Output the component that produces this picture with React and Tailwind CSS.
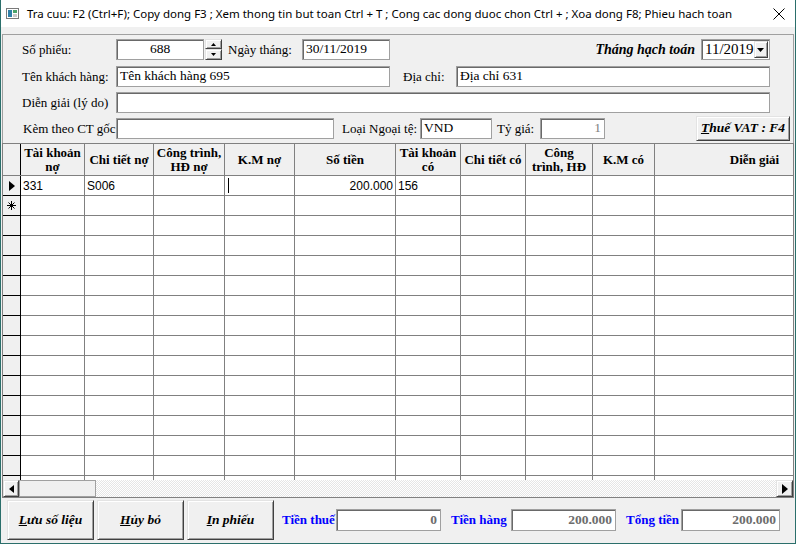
import React from 'react'

const SERIF = "[font-family:'Liberation_Serif','Times_New_Roman',serif]"
const SANS = "[font-family:'Liberation_Sans',Arial,sans-serif]"
const BOX = 'bg-white border border-[#a0a0a0] shadow-[inset_1px_1px_0_#696969]'
const RAISED = 'bg-[#f0f0f0] border border-t-[#e3e3e3] border-l-[#e3e3e3] border-r-[#404040] border-b-[#404040] shadow-[inset_1px_1px_0_#ffffff,inset_-1px_-1px_0_#a0a0a0]'

const COLS = [
  { w: 'w-[64px]', label: ['Tài khoản', 'nợ'] },
  { w: 'w-[69px]', label: ['Chi tiết nợ'] },
  { w: 'w-[71px]', label: ['Công trình,', 'HĐ nợ'] },
  { w: 'w-[70px]', label: ['K.M nợ'] },
  { w: 'w-[101px]', label: ['Số tiền'] },
  { w: 'w-[65px]', label: ['Tài khoản', 'có'] },
  { w: 'w-[65px]', label: ['Chi tiết có'] },
  { w: 'w-[67px]', label: ['Công', 'trình, HĐ'] },
  { w: 'w-[62px]', label: ['K.M có'] },
  { w: 'w-[200px]', label: ['Diễn giải'] },
]

const ROW1 = ['331', 'S006', '', 'caret', '200.000', '156', '', '', '', '']

function Arrow({ dir }) {
  const pts = { right: '0,0 6,5 0,10', left: '5,0 0,4 5,8', down: '0,0 7,0 3.5,4', up: '0,3 5,3 2.5,0', dn: '0,0 5,0 2.5,3' }[dir]
  const size = { right: [6, 10], left: [5, 8], down: [7, 4], up: [5, 3], dn: [5, 3] }[dir]
  return (
    <svg width={size[0]} height={size[1]} viewBox={`0 0 ${size[0]} ${size[1]}`}>
      <polygon points={pts} fill="#000" />
    </svg>
  )
}

function Star() {
  return (
    <svg width="9" height="9" viewBox="0 0 9 9" stroke="#000" strokeWidth="1">
      <line x1="4.5" y1="0" x2="4.5" y2="9" />
      <line x1="0" y1="4.5" x2="9" y2="4.5" />
      <line x1="1.5" y1="1.5" x2="7.5" y2="7.5" />
      <line x1="7.5" y1="1.5" x2="1.5" y2="7.5" />
    </svg>
  )
}

function Label({ children, className = '' }) {
  return <div className={`shrink-0 text-[13px] whitespace-nowrap ${className}`}>{children}</div>
}

function Field({ value = '', className = '', align = 'text-left' }) {
  return (
    <div className={`${BOX} shrink-0 h-[21px] px-[3px] flex items-center text-[13.5px] whitespace-nowrap ${align} ${className}`}>
      <span className="w-full">{value}</span>
    </div>
  )
}

export default function App() {
  return (
    <div className={`w-[796px] h-[544px] bg-[#f0f0f0] text-black border-l border-r border-b border-[#2b6f6b] flex flex-col overflow-hidden ${SERIF}`}>
      {/* title bar */}
      <div className="h-[27px] bg-white flex items-center shrink-0">
        <svg className="ml-[5px]" width="13" height="11" viewBox="0 0 13 11">
          <rect x="0.5" y="0.5" width="12" height="10" fill="#fff" stroke="#7a7a7a" />
          <rect x="2" y="2" width="4" height="7" fill="#2f7fa8" />
          <rect x="7" y="2" width="4" height="3" fill="#4ca36b" />
          <rect x="7" y="6" width="4" height="3" fill="#c9c9c9" />
        </svg>
        <span className="ml-[8px] text-[11.5px] whitespace-nowrap [font-family:'Noto_Sans','Open_Sans',sans-serif]">
          Tra cuu: F2 (Ctrl+F); Copy dong F3 ; Xem thong tin but toan Ctrl + T ; Cong cac dong duoc chon Ctrl + ; Xoa dong F8; Phieu hach toan
        </span>
        <div className="flex-1" />
        <svg className="mr-[10px]" width="12" height="12" viewBox="0 0 12 12" stroke="#000" strokeWidth="1">
          <line x1="0.5" y1="0.5" x2="11.5" y2="11.5" />
          <line x1="11.5" y1="0.5" x2="0.5" y2="11.5" />
        </svg>
      </div>

      {/* header frame */}
      <div className="ml-[1px] mt-[7px] w-[792px] h-[109px] border-t border-l border-r border-[#a0a0a0] shrink-0 pt-[4px]">
        <div className="flex items-center h-[21px]">
          <Label className="w-[113px] pl-[19px]">Số phiếu:</Label>
          <Field value="688" className="w-[88px]" align="text-center" />
          <div className="ml-[1px] w-[17px] h-[21px] flex flex-col shrink-0">
            <div className={`${RAISED} h-[10px] flex items-center justify-center`}><Arrow dir="up" /></div>
            <div className={`${RAISED} h-[11px] flex items-center justify-center`}><Arrow dir="dn" /></div>
          </div>
          <Label className="ml-[6px] w-[74px]">Ngày tháng:</Label>
          <Field value="30/11/2019" className="w-[88px]" />
          <div className="flex-1" />
          <Label className="font-bold italic mr-[6px] text-[14px]">Tháng hạch toán</Label>
          <div className={`${BOX} w-[69px] h-[21px] flex items-center mr-[23px] shrink-0`}>
            <span className="flex-1 pl-[3px] text-[15px] leading-none">11/2019</span>
            <div className={`${RAISED} w-[16px] h-[17px] mr-[1px] flex items-center justify-center`}><Arrow dir="down" /></div>
          </div>
        </div>

        <div className="flex items-center h-[21px] mt-[6px]">
          <Label className="w-[113px] pl-[19px]">Tên khách hàng:</Label>
          <Field value="Tên khách hàng 695" className="w-[274px]" />
          <Label className="ml-[13px] w-[53px]">Địa chỉ:</Label>
          <Field value="Địa chỉ 631" className="w-[314px]" />
        </div>

        <div className="flex items-center h-[21px] mt-[5px]">
          <Label className="w-[113px] pl-[19px]">Diễn giải (lý do)</Label>
          <Field className="w-[654px]" />
        </div>

        <div className="flex items-center h-[21px] mt-[5px]">
          <Label className="w-[113px] pl-[20px] text-[12.6px]">Kèm theo CT gốc</Label>
          <Field className="w-[218px]" />
          <Label className="ml-[8px] w-[78px]">Loại Ngoại tệ:</Label>
          <Field value="VND" className="w-[72px]" />
          <Label className="ml-[5px] w-[43px]">Tỷ giá:</Label>
          <Field value="1" className="w-[65px] text-[#808080]" align="text-right" />
          <div className="flex-1" />
          <button className={`${RAISED} border-[#303030] w-[94px] h-[25px] mr-[3px] shrink-0 text-[13.5px] font-bold italic`}>
            <span className="underline">T</span>huế VAT : F4
          </button>
        </div>
      </div>

      {/* grid */}
      <div className="ml-[1px] w-[792px] h-[355px] border border-[#808080] flex flex-col overflow-hidden shrink-0 bg-white">
        <div className="flex h-[32px] shrink-0 bg-[#f0f0f0] border-b border-[#808080]">
          <div className="w-[18px] shrink-0 border-r border-black" />
          {COLS.map((c, i) => (
            <div key={i} className={`${c.w} shrink-0 border-r border-[#808080] flex flex-col items-center justify-center text-[13px] font-bold leading-[14px] text-center whitespace-nowrap overflow-hidden`}>
              {c.label.map((l, j) => <span key={j}>{l}</span>)}
            </div>
          ))}
        </div>
        <div className="h-[304px] overflow-hidden shrink-0">
          {Array.from({ length: 16 }).map((_, r) => (
            <div key={r} className="flex h-[20px]">
              <div className="w-[18px] shrink-0 bg-[#f0f0f0] border-r border-b border-black flex items-center justify-center">
                {r === 0 && <Arrow dir="right" />}
                {r === 1 && <Star />}
              </div>
              {COLS.map((c, i) => {
                const v = r === 0 ? ROW1[i] : ''
                return (
                  <div key={i} className={`${c.w} shrink-0 border-r border-b border-[#808080] px-[2px] flex items-center text-[12px] ${SANS} ${i === 4 ? 'justify-end' : ''}`}>
                    {v === 'caret' ? <div className="w-[1px] h-[15px] bg-black ml-[1px]" /> : v}
                  </div>
                )
              })}
            </div>
          ))}
        </div>
        <div className="flex h-[17px] shrink-0">
          <div className={`${RAISED} w-[16px] flex items-center justify-center`}><Arrow dir="left" /></div>
          <div className="w-[77px] bg-[#f0f0f0] border border-[#a0a0a0]" />
          <div className="flex-1 bg-[image:repeating-conic-gradient(#e6e6e6_0%_25%,#ffffff_0%_50%)] bg-[length:2px_2px]" />
          <div className={`${RAISED} w-[17px] flex items-center justify-center`}><Arrow dir="right" /></div>
        </div>
      </div>

      {/* footer */}
      <div className="flex items-center mt-[2px] pl-[6px] h-[40px] shrink-0">
        <button className={`${RAISED} w-[87px] h-[40px] text-[13.5px] font-bold italic`}><span className="underline">L</span>ưu số liệu</button>
        <button className={`${RAISED} ml-[3px] w-[87px] h-[40px] text-[13.5px] font-bold italic`}><span className="underline">H</span>ủy bỏ</button>
        <button className={`${RAISED} ml-[3px] w-[87px] h-[40px] text-[13.5px] font-bold italic`}><span className="underline">I</span>n phiếu</button>
        <Label className="ml-[8px] w-[54px] font-bold text-[#0000ff]">Tiền thuế</Label>
        <Field value="0" className="w-[105px] h-[22px] font-bold text-[#6d6d6d]" align="text-right" />
        <Label className="ml-[10px] w-[60px] font-bold text-[#0000ff]">Tiền hàng</Label>
        <Field value="200.000" className="w-[105px] h-[22px] font-bold text-[#6d6d6d]" align="text-right" />
        <Label className="ml-[10px] w-[55px] font-bold text-[#0000ff]">Tổng tiền</Label>
        <Field value="200.000" className="w-[99px] h-[22px] font-bold text-[#6d6d6d]" align="text-right" />
      </div>
    </div>
  )
}
